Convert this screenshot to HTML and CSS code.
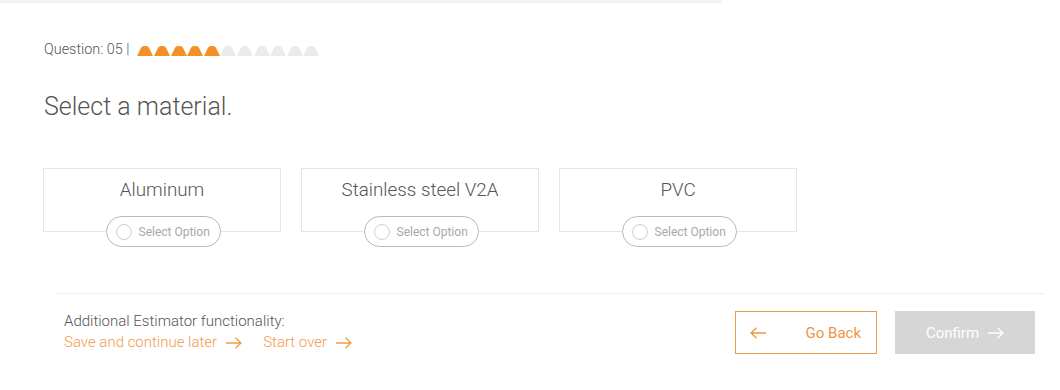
FILE: index.html
```html
<!DOCTYPE html>
<html lang="en">
<head>
<meta charset="utf-8">
<title>Estimator</title>
<link rel="stylesheet" href="styles.css">
</head>
<body>
<div class="topbar"></div>
<main class="content">
  <div class="question">
    <span class="qlabel">Question: 05 |</span>
    <div class="steps">
      <svg class="step on" viewBox="0 0 16 10"><path d="M0 10 L4 1.8 Q4.9 0 6.8 0 L9.2 0 Q11.1 0 12 1.8 L16 10 Z"/></svg>
      <svg class="step on" viewBox="0 0 16 10"><path d="M0 10 L4 1.8 Q4.9 0 6.8 0 L9.2 0 Q11.1 0 12 1.8 L16 10 Z"/></svg>
      <svg class="step on" viewBox="0 0 16 10"><path d="M0 10 L4 1.8 Q4.9 0 6.8 0 L9.2 0 Q11.1 0 12 1.8 L16 10 Z"/></svg>
      <svg class="step on" viewBox="0 0 16 10"><path d="M0 10 L4 1.8 Q4.9 0 6.8 0 L9.2 0 Q11.1 0 12 1.8 L16 10 Z"/></svg>
      <svg class="step on" viewBox="0 0 16 10"><path d="M0 10 L4 1.8 Q4.9 0 6.8 0 L9.2 0 Q11.1 0 12 1.8 L16 10 Z"/></svg>
      <svg class="step" viewBox="0 0 16 10"><path d="M0 10 L4 1.8 Q4.9 0 6.8 0 L9.2 0 Q11.1 0 12 1.8 L16 10 Z"/></svg>
      <svg class="step" viewBox="0 0 16 10"><path d="M0 10 L4 1.8 Q4.9 0 6.8 0 L9.2 0 Q11.1 0 12 1.8 L16 10 Z"/></svg>
      <svg class="step" viewBox="0 0 16 10"><path d="M0 10 L4 1.8 Q4.9 0 6.8 0 L9.2 0 Q11.1 0 12 1.8 L16 10 Z"/></svg>
      <svg class="step" viewBox="0 0 16 10"><path d="M0 10 L4 1.8 Q4.9 0 6.8 0 L9.2 0 Q11.1 0 12 1.8 L16 10 Z"/></svg>
      <svg class="step" viewBox="0 0 16 10"><path d="M0 10 L4 1.8 Q4.9 0 6.8 0 L9.2 0 Q11.1 0 12 1.8 L16 10 Z"/></svg>
      <svg class="step" viewBox="0 0 16 10"><path d="M0 10 L4 1.8 Q4.9 0 6.8 0 L9.2 0 Q11.1 0 12 1.8 L16 10 Z"/></svg>
    </div>
  </div>
  <h1 class="heading">Select a material.</h1>
  <div class="cards">
    <div class="card">
      <div class="card-title">Aluminum</div>
      <div class="pill"><span class="radio"></span><span class="pill-text">Select Option</span></div>
    </div>
    <div class="card">
      <div class="card-title">Stainless steel V2A</div>
      <div class="pill"><span class="radio"></span><span class="pill-text">Select Option</span></div>
    </div>
    <div class="card">
      <div class="card-title">PVC</div>
      <div class="pill"><span class="radio"></span><span class="pill-text">Select Option</span></div>
    </div>
  </div>
</main>
<footer class="footer">
  <div class="extra">
    <div class="extra-label">Additional Estimator functionality:</div>
    <div class="links">
      <span class="link">Save and continue later <svg class="arrow" viewBox="0 0 16 12"><path d="M0 6 H15 M9.5 0.7 L15 6 L9.5 11.3"/></svg></span>
      <span class="link">Start over <svg class="arrow" viewBox="0 0 16 12"><path d="M0 6 H15 M9.5 0.7 L15 6 L9.5 11.3"/></svg></span>
    </div>
  </div>
  <div class="buttons">
    <button class="btn back"><svg class="arrow" viewBox="0 0 16 12"><path d="M16 6 H1 M6.5 0.7 L1 6 L6.5 11.3"/></svg><span>Go Back</span></button>
    <button class="btn confirm"><span>Confirm</span><svg class="arrow" viewBox="0 0 16 12"><path d="M0 6 H15 M9.5 0.7 L15 6 L9.5 11.3"/></svg></button>
  </div>
</footer>
</body>
</html>
```

FILE: styles.css
```css
* { box-sizing: border-box; }
html, body { margin: 0; padding: 0; background: #fff; }
body {
  font-family: Roboto, "Liberation Sans", Arial, sans-serif;
  font-weight: 300;
  color: #555;
  width: 1060px;
}
.topbar {
  width: 721px;
  height: 3px;
  background: #f1f1f1;
}
.content {
  padding-left: 44px;
}
.question {
  margin-top: 38px;
  display: flex;
  align-items: center;
  height: 17px;
}
.qlabel {
  font-size: 14.4px;
  line-height: 17px;
  font-weight: 300;
  color: #555;
}
.steps {
  display: flex;
  gap: 0.6px;
  margin-left: 8px;
  margin-top: 2px;
}
.step {
  width: 16px;
  height: 10px;
  display: block;
  fill: #ebebeb;
}
.step.on { fill: #f39128; }
.heading {
  margin: 34px 0 0;
  font-size: 25px;
  line-height: 29px;
  font-weight: 300;
  color: #555;
}
.cards {
  margin-top: 47px;
  display: flex;
  gap: 20px;
  margin-left: -1px;
}
.card {
  width: 238px;
  height: 64px;
  border: 1px solid #e6e6e6;
  padding-top: 10px;
  display: flex;
  flex-direction: column;
  align-items: center;
}
.card-title {
  font-size: 18.8px;
  line-height: 22px;
  color: #555;
}
.pill {
  margin-top: 15px;
  height: 31px;
  width: 115px;
  flex-shrink: 0;
  border: 1px solid #b8b8b8;
  border-radius: 16px;
  background: #fff;
  display: flex;
  align-items: center;
  padding-left: 9px;
  margin-left: 2px;
}
.radio {
  width: 16px;
  height: 16px;
  border: 1px solid #cfcfcf;
  border-radius: 50%;
  flex-shrink: 0;
}
.pill-text {
  margin-left: 7px;
  font-size: 12px;
  font-weight: 400;
  color: #a8a8a8;
  white-space: nowrap;
}
.footer {
  margin-top: 61px;
  margin-left: 56px;
  width: 988px;
  border-top: 1px solid #efefef;
  padding: 17px 9px 0 8px;
  display: flex;
  justify-content: space-between;
}
.extra {
  font-size: 15px;
  line-height: 21px;
  margin-top: 0;
}
.extra-label { color: #555; }
.links {
  display: flex;
  gap: 21px;
}
.link {
  color: #f29a4c;
  display: inline-flex;
  align-items: center;
}
.link .arrow {
  margin-left: 9px;
  width: 16px;
  height: 12px;
  fill: none;
  stroke: #f29a4c;
  stroke-width: 1.3;
}
.buttons {
  display: flex;
  gap: 18px;
}
.btn {
  font-family: inherit;
  font-size: 15px;
  font-weight: 400;
  height: 43px;
  display: flex;
  align-items: center;
  padding: 0;
  cursor: pointer;
}
.btn .arrow {
  width: 16px;
  height: 12px;
  fill: none;
  stroke-width: 1.3;
}
.back {
  width: 142px;
  background: #fff;
  border: 1px solid #ec9a48;
  color: #ef9443;
  justify-content: space-between;
  padding: 0 15px 0 14px;
}
.back .arrow { stroke: #ef9443; }
.confirm {
  width: 140px;
  background: #d6d6d6;
  border: none;
  color: #fff;
  justify-content: center;
  gap: 9px;
}
.confirm .arrow { stroke: #fff; }
```
